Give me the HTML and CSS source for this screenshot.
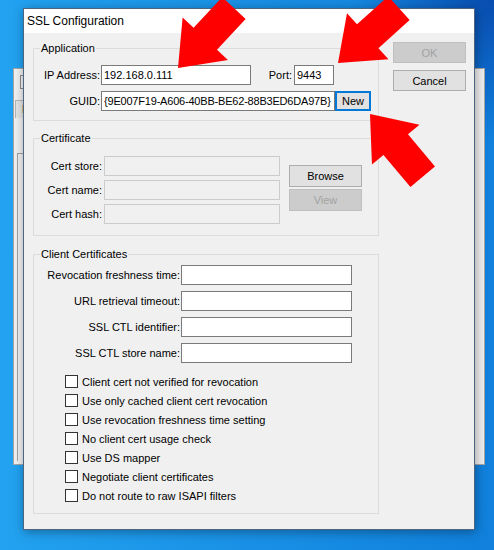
FILE: index.html
```html
<!DOCTYPE html>
<html lang="en">
<head>
<meta charset="utf-8">
<title>SSL Configuration</title>
<link rel="stylesheet" href="styles.css">
</head>
<body>
<div class="desktop">
  <div class="bgwin">
    <div class="bg-field"></div>
    <div class="bg-header">L</div>
    <div class="bg-panel"></div>
  </div>

  <div class="dialog">
    <div class="titlebar">SSL Configuration</div>
    <div class="client">
      <div class="groups">
        <fieldset class="group">
          <legend>Application</legend>
          <div class="app-body">
            <div class="row">
              <label class="lbl lbl-app">IP Address:</label>
              <input class="tb tb-ip" value="192.168.0.111" readonly>
              <label class="lbl lbl-port">Port:</label>
              <input class="tb tb-port" value="9443" readonly>
            </div>
            <div class="row">
              <label class="lbl lbl-app">GUID:</label>
              <input class="tb tb-guid" value="{9E007F19-A606-40BB-BE62-88B3ED6DA97B}" readonly>
              <button class="btn btn-new" type="button">New</button>
            </div>
          </div>
        </fieldset>

        <fieldset class="group group-cert">
          <legend>Certificate</legend>
          <div class="cert-body">
            <div class="cert-fields">
              <div class="row">
                <label class="lbl lbl-cert">Cert store:</label>
                <input class="tb tb-off" disabled>
              </div>
              <div class="row">
                <label class="lbl lbl-cert">Cert name:</label>
                <input class="tb tb-off" disabled>
              </div>
              <div class="row">
                <label class="lbl lbl-cert">Cert hash:</label>
                <input class="tb tb-off" disabled>
              </div>
            </div>
            <div class="cert-buttons">
              <button class="btn btn-side" type="button">Browse</button>
              <button class="btn btn-side" type="button" disabled>View</button>
            </div>
          </div>
        </fieldset>

        <fieldset class="group group-client">
          <legend>Client Certificates</legend>
          <div class="cc-body">
            <div class="cc-fields">
              <div class="row">
                <label class="lbl lbl-cc">Revocation freshness time:</label>
                <input class="tb tb-cc" readonly>
              </div>
              <div class="row">
                <label class="lbl lbl-cc">URL retrieval timeout:</label>
                <input class="tb tb-cc" readonly>
              </div>
              <div class="row">
                <label class="lbl lbl-cc">SSL CTL identifier:</label>
                <input class="tb tb-cc" readonly>
              </div>
              <div class="row">
                <label class="lbl lbl-cc">SSL CTL store name:</label>
                <input class="tb tb-cc" readonly>
              </div>
            </div>
            <div class="checks">
              <div class="check"><span class="box"></span><span>Client cert not verified for revocation</span></div>
              <div class="check"><span class="box"></span><span>Use only cached client cert revocation</span></div>
              <div class="check"><span class="box"></span><span>Use revocation freshness time setting</span></div>
              <div class="check"><span class="box"></span><span>No client cert usage check</span></div>
              <div class="check"><span class="box"></span><span>Use DS mapper</span></div>
              <div class="check"><span class="box"></span><span>Negotiate client certificates</span></div>
              <div class="check"><span class="box"></span><span>Do not route to raw ISAPI filters</span></div>
            </div>
          </div>
        </fieldset>
      </div>

      <div class="actions">
        <button class="btn btn-main" type="button" disabled>OK</button>
        <button class="btn btn-main" type="button">Cancel</button>
      </div>
    </div>
  </div>

  <svg class="arrows" width="494" height="550" viewBox="0 0 494 550" aria-hidden="true">
    <polygon class="arrow" points="0,0 40,-31 40,-16 82,-16 82,16 40,16 40,31" transform="translate(178 68) rotate(-47)"/>
    <polygon class="arrow" points="0,0 40,-31 40,-16 82,-16 82,16 40,16 40,31" transform="translate(338 63) rotate(-42)"/>
    <polygon class="arrow" points="0,0 40,-31 40,-16 82,-16 82,16 40,16 40,31" transform="translate(370 114) rotate(50)"/>
  </svg>
</div>
</body>
</html>
```

FILE: styles.css
```css
* {
  box-sizing: border-box;
}

html,
body {
  margin: 0;
  padding: 0;
}

body {
  width: 494px;
  height: 550px;
  overflow: hidden;
  font-family: "Liberation Sans", Arial, sans-serif;
  font-size: 11px;
  color: #000;
}

.desktop {
  position: relative;
  width: 494px;
  height: 550px;
  overflow: hidden;
  background:
    radial-gradient(circle at 100% 0%, rgba(8, 70, 170, 0.9) 0, rgba(8, 70, 170, 0) 140px),
    linear-gradient(90deg, #22a2f0 0%, #1a92e6 45%, #1080dc 100%);
}

/* window behind the dialog */
.bgwin {
  position: absolute;
  left: 13px;
  top: 68px;
  width: 472px;
  height: 397px;
  background: #f0f0f0;
  border: 1px solid #a6a6a6;
  padding-top: 6px;
}

.bg-field {
  margin-left: 6px;
  width: 200px;
  height: 14px;
  border: 1px solid #8c8c8c;
  background: #f4f4f4;
}

.bg-header {
  margin: 11px 0 0 1px;
  width: 300px;
  height: 18px;
  border-top: 1px solid #b4b4b4;
  border-left: 1px solid #b4b4b4;
  background: #e4e4e4;
  padding-left: 6px;
  line-height: 17px;
}

.bg-panel {
  margin: 35px 0 0 3px;
  width: 300px;
  height: 308px;
  border-left: 1px solid #a0a0a0;
  border-top: 1px solid #a0a0a0;
}

/* dialog */
.dialog {
  position: absolute;
  left: 23px;
  top: 8px;
  width: 452px;
  height: 522px;
  border: 1px solid #4d6580;
  background: #f0f0f0;
  box-shadow: 1px 2px 10px rgba(0, 0, 0, 0.35);
  display: flex;
  flex-direction: column;
}

.titlebar {
  height: 24px;
  background: #fff;
  padding-left: 3px;
  font-size: 12px;
  line-height: 24px;
}

.client {
  flex: 1;
  display: flex;
  align-items: flex-start;
  padding: 9px 8px 0 9px;
}

.groups {
  width: 346px;
  flex: none;
}

.actions {
  margin-left: 14px;
  width: 73px;
  display: flex;
  flex-direction: column;
  gap: 7px;
}

.group {
  margin: 0;
  padding: 0;
  min-width: 0;
  border: 1px solid #dcdcdc;
}

.group legend {
  margin-left: 6px;
  padding: 0 1px;
  font-size: 11px;
  line-height: 13px;
}

.group-cert {
  margin-top: 11px;
}

.group-client {
  margin-top: 12px;
}

.row {
  display: flex;
  align-items: center;
  height: 20px;
}

.lbl {
  flex: none;
  line-height: 20px;
  text-align: right;
  white-space: nowrap;
}

.tb {
  flex: none;
  height: 20px;
  margin: 0;
  padding: 0 2px;
  border: 1px solid #7a7a7a;
  border-radius: 0;
  background: #fff;
  font: inherit;
  color: #000;
  outline: none;
}

.btn {
  flex: none;
  margin: 0;
  padding: 0;
  border: 1px solid #adadad;
  border-radius: 0;
  background: #e1e1e1;
  font: inherit;
  color: #000;
}

.btn:disabled {
  background: #cccccc;
  border-color: #bfbfbf;
  color: #a2a2a2;
}

/* Application */
.app-body {
  padding: 10px 0 9px;
  display: flex;
  flex-direction: column;
  gap: 6px;
}

.lbl-app {
  width: 66px;
  margin-right: 1px;
}

.tb-ip {
  width: 150px;
}

.lbl-port {
  width: 25px;
  margin-left: 16px;
  margin-right: 2px;
}

.tb-port {
  width: 40px;
}

.tb-guid {
  width: 234px;
  letter-spacing: -0.2px;
}

.btn-new {
  width: 36px;
  height: 20px;
  border: 2px solid #0078d7;
}

/* Certificate */
.cert-body {
  display: flex;
  align-items: flex-start;
  padding: 11px 0 11px;
}

.cert-fields {
  display: flex;
  flex-direction: column;
  gap: 4px;
}

.lbl-cert {
  width: 68px;
  margin-right: 2px;
}

.tb-off {
  width: 176px;
  background: #f0f0f0;
  border-color: #cccccc;
}

.cert-buttons {
  margin: 9px 0 0 9px;
  display: flex;
  flex-direction: column;
  gap: 2px;
}

.btn-side {
  width: 73px;
  height: 22px;
}

.btn-main {
  width: 73px;
  height: 21px;
}

/* Client certificates */
.cc-body {
  padding: 4px 0 8px;
}

.cc-fields {
  display: flex;
  flex-direction: column;
  gap: 6px;
}

.lbl-cc {
  width: 146px;
  margin-right: 1px;
}

.tb-cc {
  width: 171px;
}

.checks {
  margin-top: 9px;
  padding-left: 31px;
}

.check {
  display: flex;
  align-items: center;
  height: 19px;
  white-space: nowrap;
}

.box {
  flex: none;
  width: 13px;
  height: 13px;
  margin-right: 4px;
  border: 1px solid #333;
  background: #fff;
}

/* annotation arrows */
.arrows {
  position: absolute;
  left: 0;
  top: 0;
  pointer-events: none;
}

.arrow {
  fill: #ff0000;
}
```
